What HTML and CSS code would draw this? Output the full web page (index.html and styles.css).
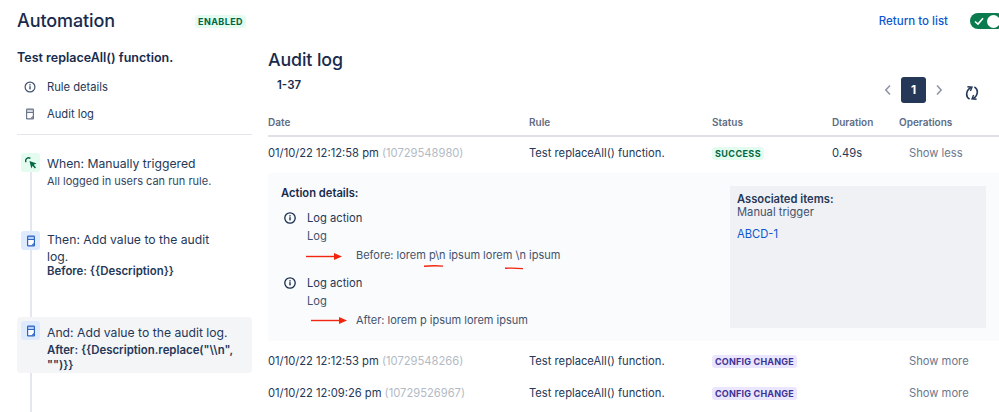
FILE: index.html
```html
<!DOCTYPE html>
<html lang="en">
<head>
<meta charset="utf-8">
<title>Automation - Audit log</title>
<link rel="stylesheet" href="styles.css">
</head>
<body>
<header class="top">
  <div class="top-left">
    <h1 class="title">Automation</h1>
    <span class="loz loz-green">ENABLED</span>
  </div>
  <div class="top-right">
    <a class="link">Return to list</a>
    <span class="toggle">
      <svg class="toggle-check" width="12" height="12" viewBox="0 0 12 12"><path d="M2 6.500l3 2.600L10 3.200" fill="none" stroke="#fff" stroke-width="1.600"/></svg>
      <span class="knob"></span>
    </span>
  </div>
</header>
<div class="layout">
  <aside class="side">
    <h2 class="rule-name">Test replaceAll() function.</h2>
    <nav class="nav">
      <div class="nav-item">
        <svg class="nav-icon" width="14" height="14" viewBox="0 0 14 14"><circle cx="7" cy="7" r="4.900" fill="none" stroke="#42526E" stroke-width="1.200"/><rect x="6.300" y="6.200" width="1.400" height="3.200" fill="#42526E"/><rect x="6.300" y="4.200" width="1.400" height="1.300" fill="#42526E"/></svg>
        <span>Rule details</span>
      </div>
      <div class="nav-item">
        <svg class="nav-icon" width="14" height="14" viewBox="0 0 14 14"><rect x="3" y="1.500" width="8" height="11" rx="1.200" fill="#6B778C"/><rect x="4.200" y="2.800" width="5.600" height="2.200" fill="#D5D9E0"/><rect x="4.200" y="6" width="5.600" height="5.200" fill="#fff"/><path d="M7.500 11.200h2.300V8.800z" fill="#6B778C"/></svg>
        <span>Audit log</span>
      </div>
    </nav>
    <div class="steps">
      <div class="step step-when">
        <span class="step-icon ic-green">
          <svg width="14" height="14" viewBox="0 0 14 14"><path d="M5.500 5l7 2.600-2.800 1.200 2.300 2.600-1.200 1-2.200-2.600-1.300 2.600z" fill="#006644"/><path d="M2 6.200a3 3 0 0 1 4.400-3.800" fill="none" stroke="#006644" stroke-width="1.300"/></svg>
        </span>
        <div class="step-body">
          <div class="step-title">When: Manually triggered</div>
          <div class="step-sub">All logged in users can run rule.</div>
        </div>
      </div>
      <div class="step step-then">
        <span class="step-icon ic-blue">
          <svg width="14" height="14" viewBox="0 0 14 14"><rect x="3" y="1.500" width="8" height="11" rx="1.200" fill="#2F66C4"/><rect x="4.200" y="2.800" width="5.600" height="2.200" fill="#BBD0F2"/><rect x="4.200" y="6" width="5.600" height="5.200" fill="#fff"/><path d="M7.500 11.200h2.300V8.800z" fill="#2F66C4"/></svg>
        </span>
        <div class="step-body">
          <div class="step-title">Then: Add value to the audit log.</div>
          <div class="step-code">Before: {{Description}}</div>
        </div>
      </div>
      <div class="step step-and">
        <span class="step-icon ic-blue">
          <svg width="14" height="14" viewBox="0 0 14 14"><rect x="3" y="1.500" width="8" height="11" rx="1.200" fill="#2F66C4"/><rect x="4.200" y="2.800" width="5.600" height="2.200" fill="#BBD0F2"/><rect x="4.200" y="6" width="5.600" height="5.200" fill="#fff"/><path d="M7.500 11.200h2.300V8.800z" fill="#2F66C4"/></svg>
        </span>
        <div class="step-body">
          <div class="step-title">And: Add value to the audit log.</div>
          <div class="step-code">After: {{Description.replace("\\n", "")}}</div>
        </div>
      </div>
    </div>
  </aside>
  <main class="main">
    <h2 class="main-title">Audit log</h2>
    <div class="toolbar">
      <span class="count">1-37</span>
      <div class="pager">
        <svg width="10" height="12" viewBox="0 0 10 12"><path d="M7 1.500L2.800 6 7 10.500" fill="none" stroke="#8993A4" stroke-width="1.500"/></svg>
        <span class="page">1</span>
        <svg width="10" height="12" viewBox="0 0 10 12"><path d="M3 1.500L7.200 6 3 10.500" fill="none" stroke="#8993A4" stroke-width="1.500"/></svg>
        <svg class="refresh" width="16" height="16" viewBox="0 0 16 16"><path d="M5.600 14.200C2.800 12.400 2 9 3.600 5.600 4.400 4 5.600 3 7 2.400" fill="none" stroke="#253858" stroke-width="1.600"/><path d="M3.400 1.800l4.600.4-1.600 3.800" fill="none" stroke="#253858" stroke-width="1.400"/><path d="M10.400 1.800c2.800 1.800 3.600 5.200 2 8.600-.8 1.600-2 2.600-3.400 3.200" fill="none" stroke="#253858" stroke-width="1.600"/><path d="M12.600 14.200L8 13.800l1.600-3.800" fill="none" stroke="#253858" stroke-width="1.400"/></svg>
      </div>
    </div>
    <div class="row head">
      <span>Date</span><span>Rule</span><span>Status</span><span>Duration</span><span>Operations</span>
    </div>
    <div class="row first">
      <span>01/10/22 12:12:58 pm <span class="muted">(10729548980)</span></span>
      <span>Test replaceAll() function.</span>
      <span><span class="loz loz-green">SUCCESS</span></span>
      <span>0.49s</span>
      <span class="op">Show less</span>
    </div>
    <section class="details">
      <div class="actions">
        <div class="detail-head">Action details:</div>
        <div class="action">
          <svg class="action-icon" width="14" height="14" viewBox="0 0 14 14"><circle cx="7" cy="7" r="5.200" fill="none" stroke="#172B4D" stroke-width="1.300"/><rect x="6.300" y="6.200" width="1.400" height="3.200" fill="#172B4D"/><rect x="6.300" y="4.200" width="1.400" height="1.300" fill="#172B4D"/></svg>
          <div class="action-body">
            <div class="action-title">Log action</div>
            <div class="action-sub">Log</div>
            <div class="action-msg">Before: lorem p\n ipsum lorem \n ipsum</div>
          </div>
        </div>
        <div class="action">
          <svg class="action-icon" width="14" height="14" viewBox="0 0 14 14"><circle cx="7" cy="7" r="5.200" fill="none" stroke="#172B4D" stroke-width="1.300"/><rect x="6.300" y="6.200" width="1.400" height="3.200" fill="#172B4D"/><rect x="6.300" y="4.200" width="1.400" height="1.300" fill="#172B4D"/></svg>
          <div class="action-body">
            <div class="action-title">Log action</div>
            <div class="action-sub">Log</div>
            <div class="action-msg">After: lorem p ipsum lorem ipsum</div>
          </div>
        </div>
        <svg class="marks" width="320" height="168" viewBox="0 0 320 168">
          <g fill="none" stroke="#F0260F" stroke-width="1.400">
            <path d="M38 83.500h30"/><path d="M43 147.500h30"/>
            <path d="M156 93.300c6-.6 13-.6 19-.2"/><path d="M237 95.300c6-.4 12-.2 18 .3"/>
          </g>
          <path d="M66 80l8 3.500-8 3.500z" fill="#F0260F"/>
          <path d="M71 144l8 3.500-8 3.500z" fill="#F0260F"/>
        </svg>
      </div>
      <aside class="assoc">
        <div class="assoc-head">Associated items:</div>
        <div class="assoc-sub">Manual trigger</div>
        <a class="link assoc-link">ABCD-1</a>
      </aside>
    </section>
    <div class="row">
      <span>01/10/22 12:12:53 pm <span class="muted">(10729548266)</span></span>
      <span>Test replaceAll() function.</span>
      <span><span class="loz loz-purple">CONFIG CHANGE</span></span>
      <span></span>
      <span class="op">Show more</span>
    </div>
    <div class="row">
      <span>01/10/22 12:09:26 pm <span class="muted">(10729526967)</span></span>
      <span>Test replaceAll() function.</span>
      <span><span class="loz loz-purple">CONFIG CHANGE</span></span>
      <span></span>
      <span class="op">Show more</span>
    </div>
  </main>
</div>
</body>
</html>
```
FILE: styles.css
```css
* { box-sizing: border-box; }
html, body { margin: 0; height: 412px; overflow: hidden; }
body {
  width: 999px;
  background: #fff;
  color: #172B4D;
  font-family: Inter, "Liberation Sans", sans-serif;
  font-size: 11.200px;
  line-height: 16px;
}
h1, h2 { margin: 0; font-weight: 500; }
.top {
  display: flex;
  justify-content: space-between;
  align-items: center;
  height: 42px;
  padding-left: 17px;
  overflow: hidden;
}
.top-left { display: flex; align-items: center; }
.title { font-size: 18px; line-height: 42px; width: 178px; letter-spacing: -.1px; }
.top-right { display: flex; align-items: center; gap: 22px; margin-right: -6px; }
.link { color: #0B57D0; font-weight: 500; font-size: 11.500px; }
.toggle {
  width: 35px; height: 16px; border-radius: 8px; background: #0A7A4F;
  display: flex; align-items: center; justify-content: space-between; padding: 0 5px 0 3px;
}
.knob { width: 13px; height: 13px; border-radius: 50%; background: #fff; }
.loz {
  display: inline-block;
  border-radius: 3px;
  padding: 0 3px;
  font-size: 9px;
  line-height: 13px;
  font-weight: 700;
  letter-spacing: .42px;
  white-space: nowrap;
}
.loz-green { background: #E3FCEF; color: #006644; }
.loz-purple { background: #EAE6FF; color: #403294; letter-spacing: .2px; }
.layout { display: grid; grid-template-columns: 252px 1fr; height: 370px; overflow: hidden; }
.side { padding-left: 17px; display: flex; flex-direction: column; }
.rule-name { font-size: 12.500px; line-height: 16px; font-weight: 600; margin-top: 8px; }
.nav { padding-bottom: 7px; border-bottom: 1px solid #E4E6EB; margin-top: 7px; }
.nav-item { display: flex; align-items: center; height: 27px; color: #253858; }
.nav-icon { margin: 0 10px 0 6px; }
.steps { position: relative; padding-top: 18px; flex: 1; }
.steps::before { content: ""; position: absolute; left: 13px; top: 18px; bottom: 0; width: 1.500px; background: #E4E6F0; }
.step { position: relative; display: flex; gap: 7px; padding-left: 4px; }
.step-icon { flex: none; width: 19px; height: 19px; border-radius: 3px; display: flex; align-items: center; justify-content: center; }
.ic-green { background: #E3FCEF; }
.ic-blue { background: #DEEBFF; }
.step-title { font-size: 12.200px; line-height: 17px; color: #253858; }
.step-sub { font-size: 11px; line-height: 17px; color: #344563; margin-top: 1px; }
.step-code { font-size: 11.400px; line-height: 15px; font-weight: 600; color: #253858; }
.step-when { height: 78px; }
.step-when .step-title { padding-top: 1.500px; }
.step-then { height: 86px; padding-right: 35px; }
.step-then .step-code { margin-top: -1px; }
.step-and { height: 56px; background: #F4F5F7; border-radius: 4px; padding-top: 4px; padding-right: 4px; }
.step-and .step-title { padding-top: 2.500px; }
.step-and .step-code { margin-top: 2px; }
.main { padding-left: 16px; min-width: 0; }
.main-title { font-size: 17.800px; line-height: 24px; margin-top: 6px; letter-spacing: -.1px; }
.toolbar { display: flex; justify-content: space-between; height: 37px; }
.count { font-weight: 600; font-size: 11.500px; padding-left: 9px; margin-top: 5px; }
.pager { display: flex; align-items: center; height: 26px; margin: 5px 19px 0 0; gap: 8px; }
.page { width: 25px; height: 26px; border-radius: 3px; background: #253858; color: #fff; font-size: 12px; font-weight: 700; display: flex; align-items: center; justify-content: center; }
.refresh { margin-left: 12px; margin-top: 6px; }
.row {
  display: grid;
  grid-template-columns: 261px 183px 120px 67px 1fr;
  align-items: center;
  height: 32px;
  color: #253858;
  white-space: nowrap;
}
.row.head {
  height: 28px;
  color: #5E6C84;
  font-size: 10px;
  font-weight: 600;
  border-bottom: 2px solid #DFE1E6;
  padding-bottom: 1px;
}
.row.first { height: 36px; padding-bottom: 4px; }
.muted { color: #B3BAC5; }
.op { color: #6B778C; padding-left: 10px; }
.details {
  display: grid;
  grid-template-columns: 462px 256px;
  height: 168px;
  background: #FAFBFC;
  margin-bottom: 4px;
}
.actions { position: relative; padding: 12px 0 0 13px; }
.detail-head { font-weight: 600; line-height: 16px; margin-bottom: 9px; }
.action { display: flex; gap: 10px; margin-bottom: 10px; }
.action-icon { flex: none; margin-top: 1px; margin-left: 2px; }
.action-body { color: #42526E; }
.action-title { color: #253858; line-height: 16px; }
.action-sub { line-height: 18px; margin-top: 1px; }
.action-msg { margin-left: 49px; line-height: 20px; font-size: 11px; }
.marks { position: absolute; left: 0; top: 0; pointer-events: none; }
.assoc { background: #F0F1F5; margin-top: 13px; height: 142px; padding: 7px 7px; color: #42526E; }
.assoc-head { font-weight: 600; color: #253858; line-height: 13px; }
.assoc-sub { line-height: 13px; }
.assoc-link { display: block; font-weight: 400; font-size: 11.200px; margin-top: 7px; }
```
